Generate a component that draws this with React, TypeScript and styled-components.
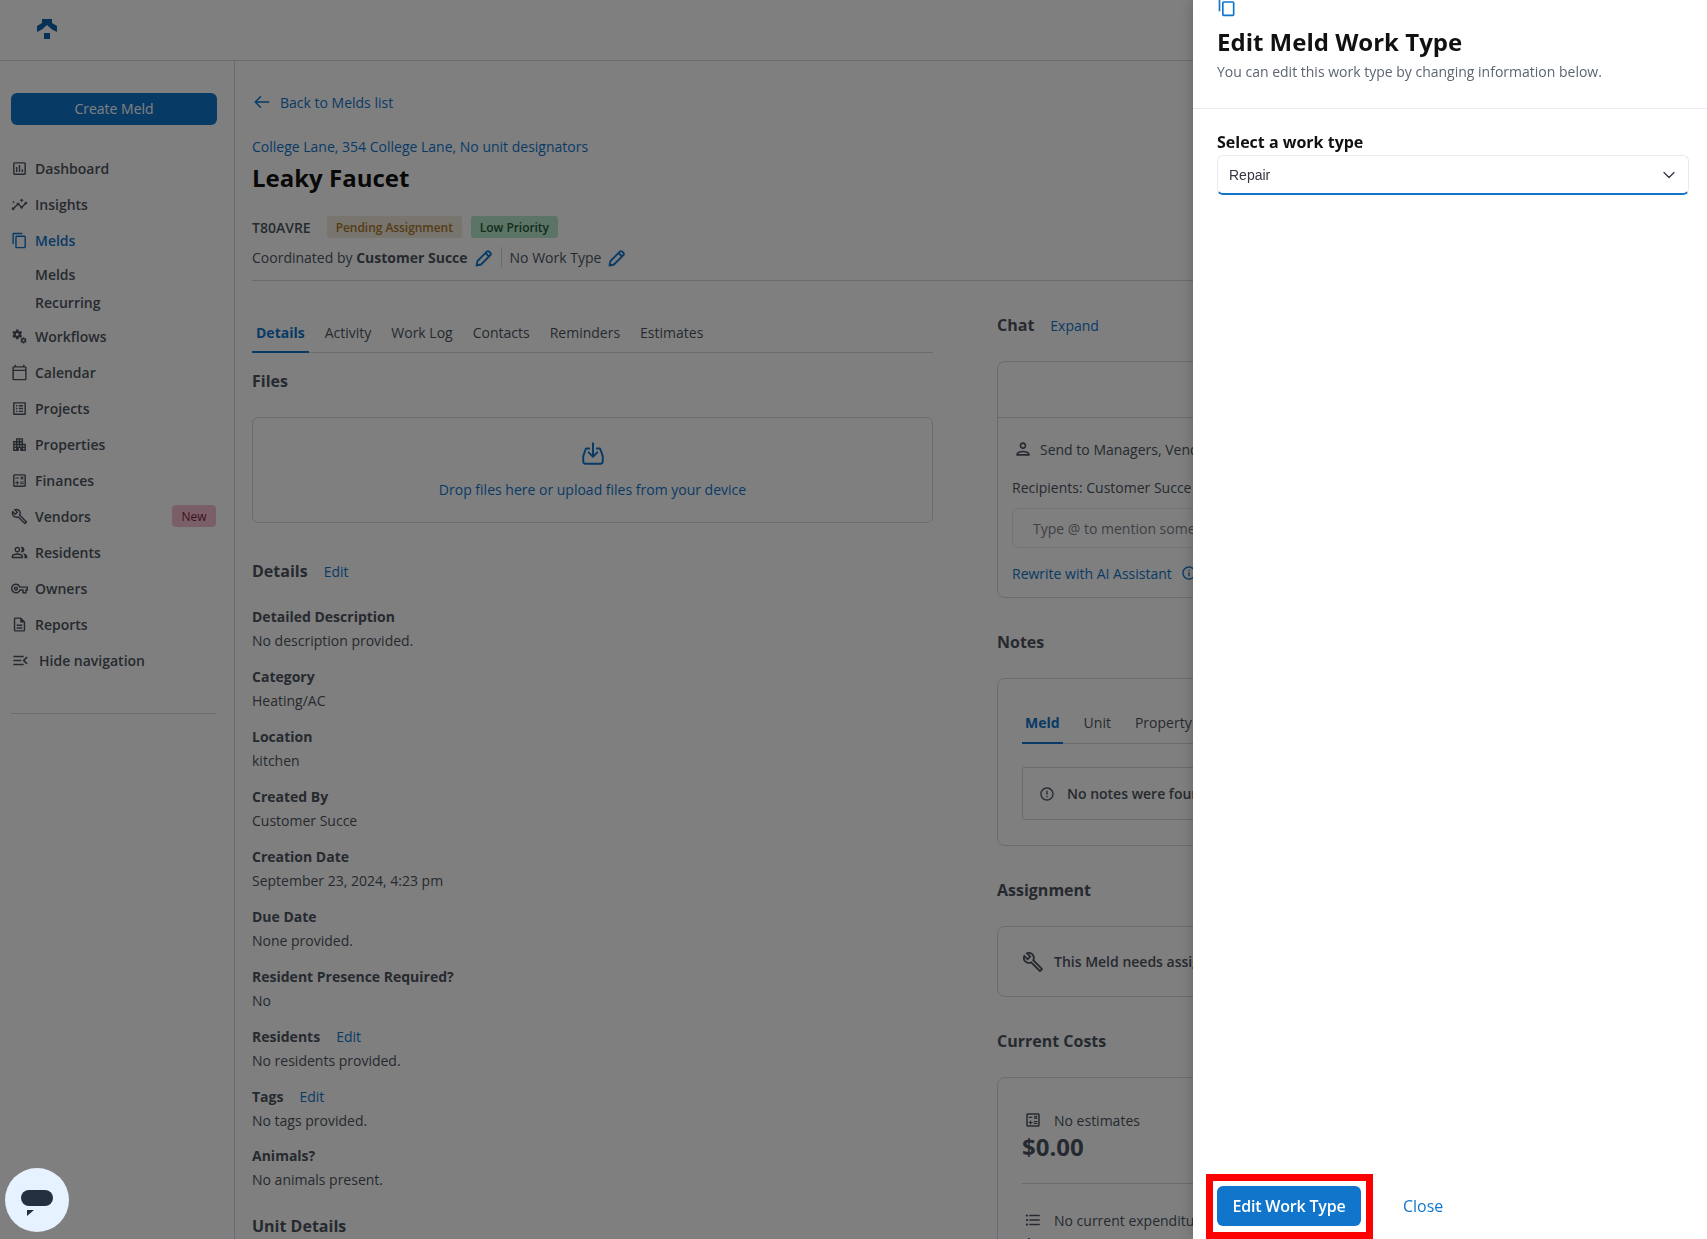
import React from "react"
import styled, { createGlobalStyle } from "styled-components"
import { ChevronDown } from "lucide-react"
import { HiOutlineArrowLeft } from "react-icons/hi"
import {
  MdApartment,
  MdContentCopy,
  MdErrorOutline,
  MdFormatListBulleted,
  MdInfoOutline,
  MdInsights,
  MdMiscellaneousServices,
  MdOutlineBuild,
  MdOutlineCalculate,
  MdOutlineCalendarToday,
  MdOutlineDescription,
  MdOutlineListAlt,
  MdOutlineMenuOpen,
  MdOutlinePeopleAlt,
  MdOutlinePerson,
  MdOutlinePoll,
  MdOutlineVpnKey,
} from "react-icons/md"

const BLUE = "#1175cc"
const TEXT = "#4c5560"
const LINE = "#d3d8de"

const GlobalStyle = createGlobalStyle`
  html, body {
    margin: 0;
    height: 1239px;
    overflow: hidden;
    background: #fff;
    font-family: "Open Sans", "Liberation Sans", sans-serif;
    font-size: 14px;
    color: ${TEXT};
  }
  * { box-sizing: border-box; }
`

const NAV = [
  { label: "Dashboard", icon: MdOutlinePoll },
  { label: "Insights", icon: MdInsights },
  { label: "Melds", icon: MdContentCopy, active: true, subs: ["Melds", "Recurring"] },
  { label: "Workflows", icon: MdMiscellaneousServices },
  { label: "Calendar", icon: MdOutlineCalendarToday },
  { label: "Projects", icon: MdOutlineListAlt },
  { label: "Properties", icon: MdApartment },
  { label: "Finances", icon: MdOutlineCalculate },
  { label: "Vendors", icon: MdOutlineBuild, badge: "New" },
  { label: "Residents", icon: MdOutlinePeopleAlt },
  { label: "Owners", icon: MdOutlineVpnKey },
  { label: "Reports", icon: MdOutlineDescription },
]

const FIELDS = [
  { label: "Detailed Description", value: "No description provided." },
  { label: "Category", value: "Heating/AC" },
  { label: "Location", value: "kitchen" },
  { label: "Created By", value: "Customer Succe" },
  { label: "Creation Date", value: "September 23, 2024, 4:23 pm" },
  { label: "Due Date", value: "None provided." },
  { label: "Resident Presence Required?", value: "No" },
  { label: "Residents", value: "No residents provided.", edit: true },
  { label: "Tags", value: "No tags provided.", edit: true },
  { label: "Animals?", value: "No animals present." },
]

const TABS = ["Details", "Activity", "Work Log", "Contacts", "Reminders", "Estimates"]

const Pencil = () => (
  <PencilSvg viewBox="0 0 18 18" width="18" height="18">
    <path d="M1.5 16.5l1-4.5L12 2.5a1.4 1.4 0 0 1 2 0l1.5 1.5a1.4 1.4 0 0 1 0 2L6 15.5z" />
    <path d="M10.5 4l3.5 3.5" />
  </PencilSvg>
)

const App = () => {
  return (
    <>
      <GlobalStyle />
      <Page>
        <Header>
          <Logo viewBox="0 0 20 20" width="20" height="20">
            <path d="M5 0H15V4L20 7V13L15 10.5L10 6L5 10.5L0 13V7L5 4Z" />
            <path d="M7 14h6v6H7z" />
          </Logo>
        </Header>
        <Body>
          <Sidebar>
            <CreateButton>Create Meld</CreateButton>
            <NavList>
              {NAV.map((item) => (
                <React.Fragment key={item.label}>
                  <NavItem $active={item.active}>
                    <item.icon size={17} />
                    <span>{item.label}</span>
                    {item.badge && <NewBadge>{item.badge}</NewBadge>}
                  </NavItem>
                  {item.subs && (
                    <SubList>
                      {item.subs.map((sub) => (
                        <SubItem key={sub}>{sub}</SubItem>
                      ))}
                    </SubList>
                  )}
                </React.Fragment>
              ))}
              <HideItem>
                <MdOutlineMenuOpen size={19} />
                <span>Hide navigation</span>
              </HideItem>
            </NavList>
            <SideDivider />
          </Sidebar>
          <Main>
            <BackLink>
              <HiOutlineArrowLeft size={18} />
              <span>Back to Melds list</span>
            </BackLink>
            <AddressLink>College Lane, 354 College Lane, No unit designators</AddressLink>
            <Title>Leaky Faucet</Title>
            <MetaRow>
              <MeldCode>T80AVRE</MeldCode>
              <Badge $bg="#f0e9dc" $color="#a9782a">Pending Assignment</Badge>
              <Badge $bg="#b9e8cc" $color="#1d5c3a">Low Priority</Badge>
            </MetaRow>
            <CoordRow>
              <span>
                Coordinated by <strong>Customer Succe</strong>
              </span>
              <Pencil />
              <VerticalBar />
              <span>No Work Type</span>
              <Pencil />
            </CoordRow>
            <TopDivider />
            <Columns>
              <LeftColumn>
                <TabBar>
                  {TABS.map((tab, i) => (
                    <Tab key={tab} $active={i === 0}>{tab}</Tab>
                  ))}
                </TabBar>
                <SectionTitle $top={16}>Files</SectionTitle>
                <DropZone>
                  <svg viewBox="0 0 24 24" width="26" height="26" fill="none" stroke={BLUE} strokeWidth="1.8" strokeLinecap="round" strokeLinejoin="round">
                    <path d="M12 2v12.5M8 10.5l4 4 4-4" />
                    <path d="M8.5 7H6.2a1 1 0 0 0-1 .7L3 14v5a2 2 0 0 0 2 2h14a2 2 0 0 0 2-2v-5l-2.2-6.3a1 1 0 0 0-1-.7h-2.3" />
                  </svg>
                  <LinkText>Drop files here or upload files from your device</LinkText>
                </DropZone>
                <TitleRow $top={36}>
                  <SectionTitle>Details</SectionTitle>
                  <LinkText>Edit</LinkText>
                </TitleRow>
                <FieldList>
                  {FIELDS.map((field) => (
                    <Field key={field.label}>
                      <FieldLabel>
                        <strong>{field.label}</strong>
                        {field.edit && <LinkText>Edit</LinkText>}
                      </FieldLabel>
                      <div>{field.value}</div>
                    </Field>
                  ))}
                </FieldList>
                <SectionTitle $top={9}>Unit Details</SectionTitle>
              </LeftColumn>
              <RightColumn>
                <TitleRow>
                  <SectionTitle>Chat</SectionTitle>
                  <LinkText>Expand</LinkText>
                </TitleRow>
                <Card $top={24}>
                  <ChatHead />
                  <ChatBody>
                    <IconLine>
                      <MdOutlinePerson size={20} />
                      <span>Send to Managers, Vendors and Residents</span>
                    </IconLine>
                    <Recipients>Recipients: Customer Succe</Recipients>
                    <ChatInput>Type @ to mention someone</ChatInput>
                    <RewriteLine>
                      <LinkText>Rewrite with AI Assistant</LinkText>
                      <MdInfoOutline size={16} color={BLUE} />
                    </RewriteLine>
                  </ChatBody>
                </Card>
                <SectionTitle $top={32}>Notes</SectionTitle>
                <Card $top={24}>
                  <NotesBody>
                    <NotesTabs>
                      <NoteTab $active>Meld</NoteTab>
                      <NoteTab>Unit</NoteTab>
                      <NoteTab>Property</NoteTab>
                    </NotesTabs>
                    <EmptyNote>
                      <MdErrorOutline size={16} />
                      <span>No notes were found</span>
                    </EmptyNote>
                  </NotesBody>
                </Card>
                <SectionTitle $top={32}>Assignment</SectionTitle>
                <Card $top={24}>
                  <AssignBody>
                    <WrenchIcon size={22} />
                    <span>This Meld needs assignment</span>
                  </AssignBody>
                </Card>
                <SectionTitle $top={32}>Current Costs</SectionTitle>
                <Card $top={24}>
                  <CostBody>
                    <CostLine>
                      <MdOutlineCalculate size={18} />
                      <span>No estimates</span>
                    </CostLine>
                    <Amount>$0.00</Amount>
                    <CostDivider />
                    <CostLine>
                      <MdFormatListBulleted size={18} />
                      <span>No current expenditures</span>
                    </CostLine>
                    <Amount>$0.00</Amount>
                  </CostBody>
                </Card>
              </RightColumn>
            </Columns>
          </Main>
        </Body>
      </Page>
      <Overlay />
      <ChatWidget>
        <svg viewBox="0 0 64 64" width="64" height="64">
          <rect x="16" y="22" width="32" height="16" rx="8" fill="#22303f" />
          <path d="M22 42h7l-7 6z" fill="#22303f" />
        </svg>
      </ChatWidget>
      <Flyout>
        <FlyoutHead>
          <MdContentCopy size={20} color={BLUE} />
          <FlyoutTitle>Edit Meld Work Type</FlyoutTitle>
          <FlyoutSub>You can edit this work type by changing information below.</FlyoutSub>
        </FlyoutHead>
        <FlyoutBody>
          <SelectLabel>Select a work type</SelectLabel>
          <SelectBox>
            <span>Repair</span>
            <ChevronDown size={20} strokeWidth={1.5} color="#343741" />
          </SelectBox>
        </FlyoutBody>
        <FlyoutFooter>
          <Highlight>
            <PrimaryButton>Edit Work Type</PrimaryButton>
          </Highlight>
          <CloseLink>Close</CloseLink>
        </FlyoutFooter>
      </Flyout>
    </>
  )
}

export default App

const Page = styled.div`
  width: 1707px;
  height: 1239px;
  display: flex;
  flex-direction: column;
  overflow: hidden;
`

const Header = styled.header`
  flex: 0 0 61px;
  padding: 19px 0 0 37px;
  border-bottom: 1px solid ${LINE};
`

const Logo = styled.svg`
  display: block;
  fill: #0e62ac;
`

const Body = styled.div`
  flex: 1;
  display: flex;
  min-height: 0;
`

const Sidebar = styled.aside`
  flex: 0 0 235px;
  padding: 32px 17px 0 11px;
  border-right: 1px solid ${LINE};
`

const CreateButton = styled.div`
  height: 32px;
  padding-bottom: 2px;
  display: flex;
  align-items: center;
  justify-content: center;
  background: ${BLUE};
  border-radius: 6px;
  color: #fff;
`

const NavList = styled.nav`
  margin-top: 25px;
  padding-right: 1px;
`

const NavItem = styled.div<{ $active?: boolean }>`
  height: 36px;
  display: flex;
  align-items: center;
  gap: 7px;
  font-weight: 600;
  color: ${(p) => (p.$active ? BLUE : TEXT)};
  svg {
    flex: none;
  }
  span:first-of-type {
    flex: 1;
  }
`

const NewBadge = styled.span`
  width: 44px;
  height: 22px;
  display: flex;
  align-items: center;
  justify-content: center;
  border-radius: 4px;
  background: #f5bfd2;
  color: #7a1f3d;
  font-size: 12px;
  font-weight: 500;
`

const SubList = styled.div`
  padding: 2px 0 2px 24px;
`

const SubItem = styled.div`
  height: 28px;
  display: flex;
  align-items: center;
  font-weight: 600;
`

const HideItem = styled(NavItem)`
  gap: 9px;
`

const SideDivider = styled.div`
  height: 1px;
  margin: 35px 1px 0 0;
  background: ${LINE};
`

const Main = styled.main`
  flex: 1;
  min-width: 0;
  padding: 30px 0 0 17px;
  overflow: hidden;
`

const BackLink = styled.div`
  height: 22px;
  display: flex;
  align-items: center;
  gap: 9px;
  color: ${BLUE};
  padding-left: 1px;
`

const AddressLink = styled.div`
  margin-top: 23px;
  line-height: 22px;
  color: ${BLUE};
`

const Title = styled.h1`
  margin: 4px 0 0;
  font-size: 24px;
  line-height: 32px;
  font-weight: 700;
  color: #111;
`

const MetaRow = styled.div`
  margin-top: 22px;
  height: 22px;
  display: flex;
  align-items: center;
  gap: 9px;
`

const MeldCode = styled.span`
  margin-right: 7px;
  font-weight: 600;
`

const Badge = styled.span<{ $bg: string; $color: string }>`
  height: 22px;
  padding: 0 9px;
  display: flex;
  align-items: center;
  border-radius: 3px;
  font-size: 12px;
  font-weight: 600;
  letter-spacing: -0.05px;
  background: ${(p) => p.$bg};
  color: ${(p) => p.$color};
`

const CoordRow = styled.div`
  margin-top: 7px;
  height: 24px;
  display: flex;
  align-items: center;
  strong {
    font-weight: 700;
  }
`

const PencilSvg = styled.svg`
  margin: 2px 0 0 7px;
  fill: none;
  stroke: ${BLUE};
  stroke-width: 1.8;
  stroke-linejoin: round;
`

const VerticalBar = styled.div`
  width: 1px;
  height: 20px;
  margin: 0 8px 0 8px;
  background: ${LINE};
`

const TopDivider = styled.div`
  height: 1px;
  margin-top: 11px;
  background: ${LINE};
`

const Columns = styled.div`
  display: flex;
  gap: 64px;
  margin-top: 32px;
`

const LeftColumn = styled.div`
  flex: 0 0 681px;
`

const TabBar = styled.div`
  height: 40px;
  display: flex;
  gap: 20px;
  border-bottom: 1px solid ${LINE};
`

const Tab = styled.div<{ $active?: boolean }>`
  height: 40px;
  padding: 10px 4px 0;
  margin-right: -8px;
  font-weight: ${(p) => (p.$active ? 700 : 400)};
  color: ${(p) => (p.$active ? BLUE : TEXT)};
  border-bottom: ${(p) => (p.$active ? `2px solid ${BLUE}` : "none")};
`

const SectionTitle = styled.h2<{ $top?: number }>`
  margin: ${(p) => p.$top ?? 0}px 0 0;
  font-size: 16px;
  line-height: 24px;
  font-weight: 700;
`

const DropZone = styled.div`
  margin-top: 24px;
  height: 106px;
  display: flex;
  flex-direction: column;
  align-items: center;
  padding-top: 23px;
  gap: 13px;
  border: 1px solid ${LINE};
  border-radius: 6px;
`

const LinkText = styled.span`
  color: ${BLUE};
  font-weight: 400;
`

const TitleRow = styled.div<{ $top?: number }>`
  margin-top: ${(p) => p.$top ?? 0}px;
  display: flex;
  align-items: center;
  gap: 16px;
`

const FieldList = styled.div`
  margin-top: 23px;
`

const Field = styled.div`
  height: 60px;
  line-height: 22px;
  > div:last-child {
    margin-top: 2px;
  }
  &:last-child {
    margin-top: -1px;
  }
`

const FieldLabel = styled.div`
  display: flex;
  gap: 16px;
  strong {
    font-weight: 700;
  }
`

const RightColumn = styled.div`
  flex: 0 0 640px;
`

const Card = styled.div<{ $top?: number }>`
  margin-top: ${(p) => p.$top ?? 0}px;
  border: 1px solid ${LINE};
  border-radius: 8px;
`

const ChatHead = styled.div`
  height: 56px;
  border-bottom: 1px solid ${LINE};
`

const ChatBody = styled.div`
  padding: 20px 14px 13px;
`

const IconLine = styled.div`
  height: 22px;
  display: flex;
  align-items: center;
  gap: 7px;
  padding-left: 1px;
`

const Recipients = styled.div`
  margin-top: 17px;
  line-height: 22px;
`

const ChatInput = styled.div`
  margin-top: 9px;
  height: 40px;
  padding-left: 20px;
  display: flex;
  align-items: center;
  border: 1px solid #e4e7eb;
  border-radius: 6px;
  color: #7a828c;
`

const RewriteLine = styled.div`
  margin-top: 14px;
  height: 22px;
  display: flex;
  align-items: center;
  gap: 9px;
`

const NotesBody = styled.div`
  padding: 33px 24px 25px;
`

const NotesTabs = styled.div`
  height: 32px;
  display: flex;
  gap: 18px;
  border-bottom: 1px solid ${LINE};
`

const NoteTab = styled.div<{ $active?: boolean }>`
  height: 32px;
  padding: 0 3px;
  line-height: 22px;
  font-weight: ${(p) => (p.$active ? 700 : 400)};
  color: ${(p) => (p.$active ? BLUE : TEXT)};
  border-bottom: ${(p) => (p.$active ? `2px solid ${BLUE}` : "none")};
`

const EmptyNote = styled.div`
  margin-top: 23px;
  height: 53px;
  padding-left: 16px;
  display: flex;
  align-items: center;
  gap: 12px;
  border: 1px solid ${LINE};
  border-radius: 2px;
  font-weight: 550;
`

const AssignBody = styled.div`
  height: 69px;
  padding-left: 24px;
  display: flex;
  align-items: center;
  gap: 10px;
  font-weight: 560;
`

const WrenchIcon = styled(MdOutlineBuild)`
  flex: none;
`

const CostBody = styled.div`
  padding: 31px 24px 0;
`

const CostLine = styled.div`
  height: 22px;
  padding-left: 2px;
  display: flex;
  align-items: center;
  gap: 12px;
`

const Amount = styled.div`
  font-size: 24px;
  line-height: 32px;
  font-weight: 700;
`

const CostDivider = styled.div`
  height: 1px;
  margin: 20px 0 25px;
  background: ${LINE};
`

const Overlay = styled.div`
  position: fixed;
  inset: 0;
  background: rgba(0, 0, 0, 0.5);
`

const ChatWidget = styled.div`
  position: fixed;
  left: 5px;
  top: 1168px;
  width: 64px;
  height: 64px;
  border-radius: 50%;
  background: #e6f2ff;
`

const Flyout = styled.aside`
  position: fixed;
  top: 0;
  right: 0;
  bottom: 0;
  width: 514px;
  display: flex;
  flex-direction: column;
  background: #fff;
  box-shadow: 0 0 14px rgba(0, 0, 0, 0.22);
`

const FlyoutHead = styled.div`
  height: 109px;
  padding: 0 17px 0 24px;
  border-bottom: 1px solid #e9edf2;
  svg {
    display: block;
    margin: -3px 0 0 0;
  }
`

const FlyoutTitle = styled.h2`
  margin: 9px 0 0;
  font-size: 24px;
  line-height: 32px;
  font-weight: 700;
  color: #111;
`

const FlyoutSub = styled.div`
  margin-top: 3px;
  line-height: 22px;
  color: #5c6570;
`

const FlyoutBody = styled.div`
  flex: 1;
  padding: 21px 18px 0 24px;
`

const SelectLabel = styled.div`
  font-size: 16px;
  line-height: 24px;
  font-weight: 700;
  color: #111;
`

const SelectBox = styled.div`
  margin-top: 1px;
  height: 40px;
  padding: 0 9px 0 11px;
  display: flex;
  align-items: center;
  justify-content: space-between;
  border: 1px solid #e9e9f2;
  border-bottom: 2px solid ${BLUE};
  border-radius: 6px;
  font-family: "Liberation Sans", Arial, sans-serif;
  color: #343741;
`

const FlyoutFooter = styled.div`
  display: flex;
  align-items: center;
  gap: 30px;
  padding-left: 13px;
`

const Highlight = styled.div`
  padding: 5px 5px 6px 4px;
  border: 7px solid #f00;
`

const PrimaryButton = styled.div`
  width: 144px;
  height: 40px;
  display: flex;
  align-items: center;
  justify-content: center;
  background: ${BLUE};
  border-radius: 6px;
  color: #fff;
  font-size: 16px;
  font-weight: 600;
  letter-spacing: -0.2px;
`

const CloseLink = styled.div`
  font-size: 16px;
  margin-bottom: 2px;
  color: ${BLUE};
`
